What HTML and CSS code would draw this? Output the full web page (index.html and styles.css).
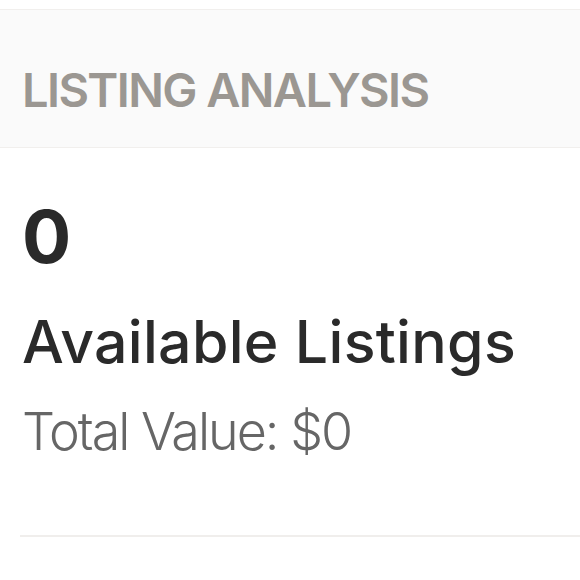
FILE: index.html
```html
<!DOCTYPE html>
<html>
<head>
<meta charset="utf-8">
<link rel="stylesheet" href="styles.css">
</head>
<body>
<section class="panel">
  <header class="panel-header">
    <h2 class="panel-title">LISTING ANALYSIS</h2>
  </header>
  <div class="panel-body">
    <div class="stat-count">0</div>
    <div class="stat-label">Available Listings</div>
    <div class="stat-value">Total Value: $0</div>
  </div>
  <div class="divider"></div>
</section>
</body>
</html>
```
FILE: styles.css
```css
html, body {
  margin: 0;
  padding: 0;
  background: #ffffff;
}
body {
  font-family: "Inter", "Lato", sans-serif;
}
.panel {
  padding-top: 9px;
}
.panel-header {
  background: #fafafa;
  border-top: 1px solid #f1efed;
  border-bottom: 1px solid #f1efed;
  height: 139px;
  box-sizing: border-box;
  padding: 56px 22px 0;
}
.panel-title {
  margin: 0;
  font-size: 47px;
  line-height: 47px;
  font-weight: 600;
  color: #9b9792;
  letter-spacing: -1.6px;
}
.panel-body {
  padding: 0 22px;
}
.stat-count {
  margin-top: 52px;
  font-size: 73px;
  line-height: 73px;
  font-weight: 700;
  color: #2a2a2a;
  letter-spacing: -2px;
}
.stat-label {
  margin-top: 39px;
  font-size: 59px;
  line-height: 59px;
  font-weight: 500;
  color: #2a2a2a;
  letter-spacing: 0.3px;
}
.stat-value {
  margin-top: 35px;
  font-size: 52px;
  line-height: 52px;
  font-weight: 300;
  color: #666666;
  letter-spacing: -2px;
}
.divider {
  margin: 77px 0 0 20px;
  border-top: 2px solid #f0eeec;
}
```
